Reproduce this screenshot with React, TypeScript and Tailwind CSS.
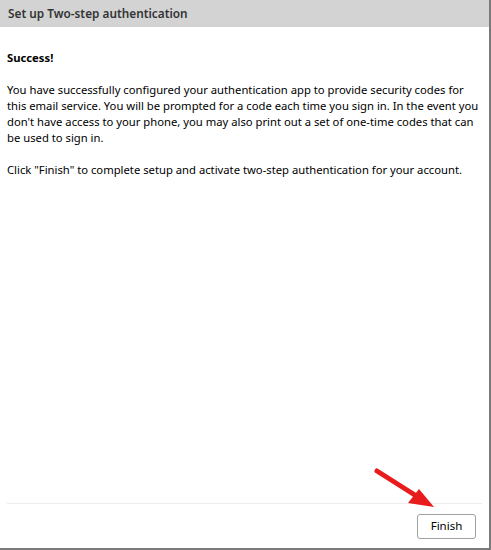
import React from "react";

export default function App() {
  return (
    <div
      className="w-[491px] h-[550px] bg-white flex flex-col border-r-2 border-b-2 border-[#7a7a7a] relative"
      style={{ fontFamily: '"Segoe UI", "Noto Sans", "Open Sans", sans-serif' }}
    >
      <div className="h-[27px] bg-[#d3d3d3] flex items-center px-[8px] shrink-0">
        <span className="text-[11.8px] font-semibold text-[#333]">Set up Two-step authentication</span>
      </div>
      <div className="flex-1 pl-[7px] pr-[4px] pt-[23px] text-[11.25px] leading-[16px] text-black">
        <div className="font-bold">Success!</div>
        <p className="mt-[16px]">
          You have successfully configured your authentication app to provide security codes for this email service. You will be prompted for a code each time you sign in. In the event you don't have access to your phone, you may also print out a set of one-time codes that can be used to sign in.
        </p>
        <p className="mt-[16px]">
          Click "Finish" to complete setup and activate two-step authentication for your account.
        </p>
      </div>
      <div className="mx-[7px] border-t border-[#ececec]" />
      <div className="h-[44px] flex items-center justify-end pr-[13px] shrink-0">
        <button className="w-[59px] h-[25px] border border-[#a0a0a0] rounded-[3px] bg-white text-[11.5px] text-black">
          Finish
        </button>
      </div>
      <svg className="absolute left-0 top-0 pointer-events-none" width="491" height="550">
        <line x1="377" y1="471" x2="418" y2="497" stroke="#e81c1c" strokeWidth="5" strokeLinecap="round" />
        <polygon points="434,507 408,503 419,489" fill="#e81c1c" />
      </svg>
    </div>
  );
}
